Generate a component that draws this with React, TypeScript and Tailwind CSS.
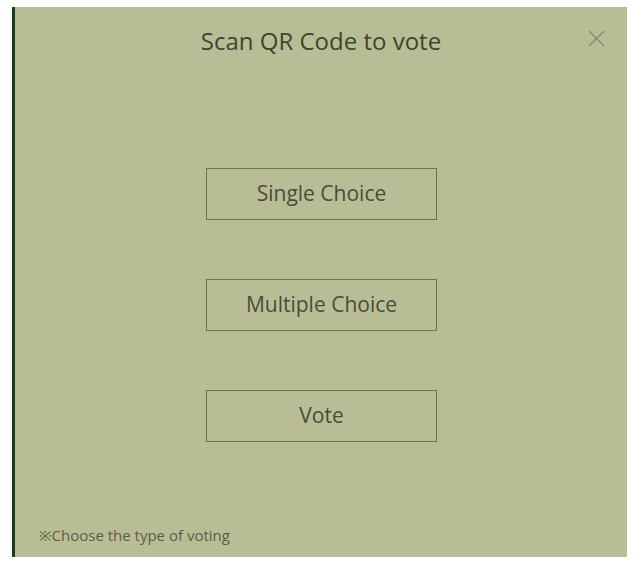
export default function App() {
  const choices = ["Single Choice", "Multiple Choice", "Vote"];

  return (
    <main className="h-[570px] w-[641px] bg-white pl-[12px] pt-[7px] font-['Open_Sans','Noto_Sans',sans-serif]">
      <section className="relative flex h-[550px] w-[615px] flex-col border-l-[3px] border-[#1f3a1c] bg-[#b9bd96]">
        {/* Header */}
        <h1 className="mt-[18px] text-center text-[24px] leading-[32px] text-[#3d4530]">
          Scan QR Code to vote
        </h1>
        <button className="absolute right-[22px] top-[23px] text-[#858a68]">
          <svg width="17" height="17" viewBox="0 0 17 17" stroke="currentColor" strokeWidth="1.3" fill="none">
            <path d="M1 1L16 16M16 1L1 16" />
          </svg>
        </button>

        {/* Choices */}
        <div className="mt-[111px] flex flex-col items-center gap-[59px] pl-[1px]">
          {choices.map((c) => (
            <button
              key={c}
              className="flex h-[52px] w-[231px] items-center justify-center border border-[#6f7350] text-[21px] text-[#474d36]"
            >
              {c}
            </button>
          ))}
        </div>

        {/* Footer */}
        <p className="mt-auto mb-[11px] pl-[24px] text-[15px] text-[#5a5f45]">
          ※Choose the type of voting
        </p>
      </section>
    </main>
  );
}
